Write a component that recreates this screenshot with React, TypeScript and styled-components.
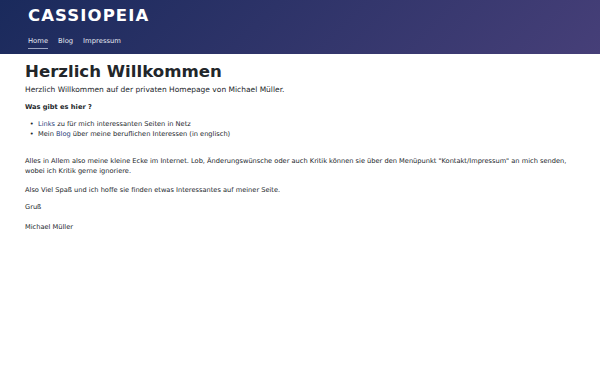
import React from "react";
import styled, { createGlobalStyle } from "styled-components";

const Global = createGlobalStyle`
  html, body { margin: 0; padding: 0; background: #fff; }
  body { font-family: "DejaVu Sans", Verdana, sans-serif; color: #22262a; }
  * { box-sizing: border-box; }
`;

const Header = styled.header`
  height: 54px;
  background-image: linear-gradient(135deg, #1a2a5c 0%, #463f78 100%);
  padding: 6px 28px 0;
  display: flex;
  flex-direction: column;
`;

const Logo = styled.div`
  color: #fff;
  font-family: "DejaVu Sans", sans-serif;
  font-weight: 700;
  font-size: 16.5px;
  letter-spacing: 1.1px;
  line-height: 20px;
`;

const Nav = styled.nav`
  display: flex;
  gap: 10px;
  margin-top: 10px;
`;

const NavLink = styled.a<{ $active?: boolean }>`
  color: #e6e9f2;
  font-size: 6.8px;
  line-height: 10px;
  padding-bottom: 2px;
  text-decoration: none;
  border-bottom: 1px solid ${(p) => (p.$active ? "rgba(210,215,235,0.7)" : "transparent")};
`;

const Main = styled.main`
  padding: 7px 12px 0 25px;
  font-size: 6.65px;
  line-height: 10.5px;
`;

const Title = styled.h1`
  margin: 0;
  font-size: 16.6px;
  line-height: 22px;
  font-weight: 700;
`;

const Intro = styled.p`
  margin: 1px 0 0;
  font-size: 7.5px;
  line-height: 12px;
`;

const Sub = styled.p`
  margin: 6px 0 0;
  font-weight: 700;
`;

const List = styled.ul`
  margin: 6px 0 0;
  padding-left: 13px;
  list-style: disc;

  li::marker {
    content: "•  ";
  }
`;

const Link = styled.a`
  color: #1f3c78;
  text-decoration: none;
`;

const Para = styled.p<{ $gap?: number }>`
  margin: ${(p) => p.$gap ?? 6}px 0 0;
`;

export default function App() {
  return (
    <>
      <Global />
      <Header>
        <Logo>CASSIOPEIA</Logo>
        <Nav>
          <NavLink $active>Home</NavLink>
          <NavLink>Blog</NavLink>
          <NavLink>Impressum</NavLink>
        </Nav>
      </Header>
      <Main>
        <Title>Herzlich Willkommen</Title>
        <Intro>Herzlich Willkommen auf der privaten Homepage von Michael Müller.</Intro>
        <Sub>Was gibt es hier ?</Sub>
        <List>
          <li><Link>Links</Link> zu für mich interessanten Seiten in Netz</li>
          <li>Mein <Link>Blog</Link> über meine beruflichen Interessen (in englisch)</li>
        </List>
        <Para $gap={16}>
          Alles in Allem also meine kleine Ecke im Internet. Lob, Änderungswünsche oder auch Kritik können sie über den Menüpunkt "Kontakt/Impressum" an mich senden, wobei ich Kritik gerne ignoriere.
        </Para>
        <Para $gap={8}>Also Viel Spaß und ich hoffe sie finden etwas Interessantes auf meiner Seite.</Para>
        <Para $gap={7}>Gruß</Para>
        <Para $gap={9}>Michael Müller</Para>
      </Main>
    </>
  );
}
